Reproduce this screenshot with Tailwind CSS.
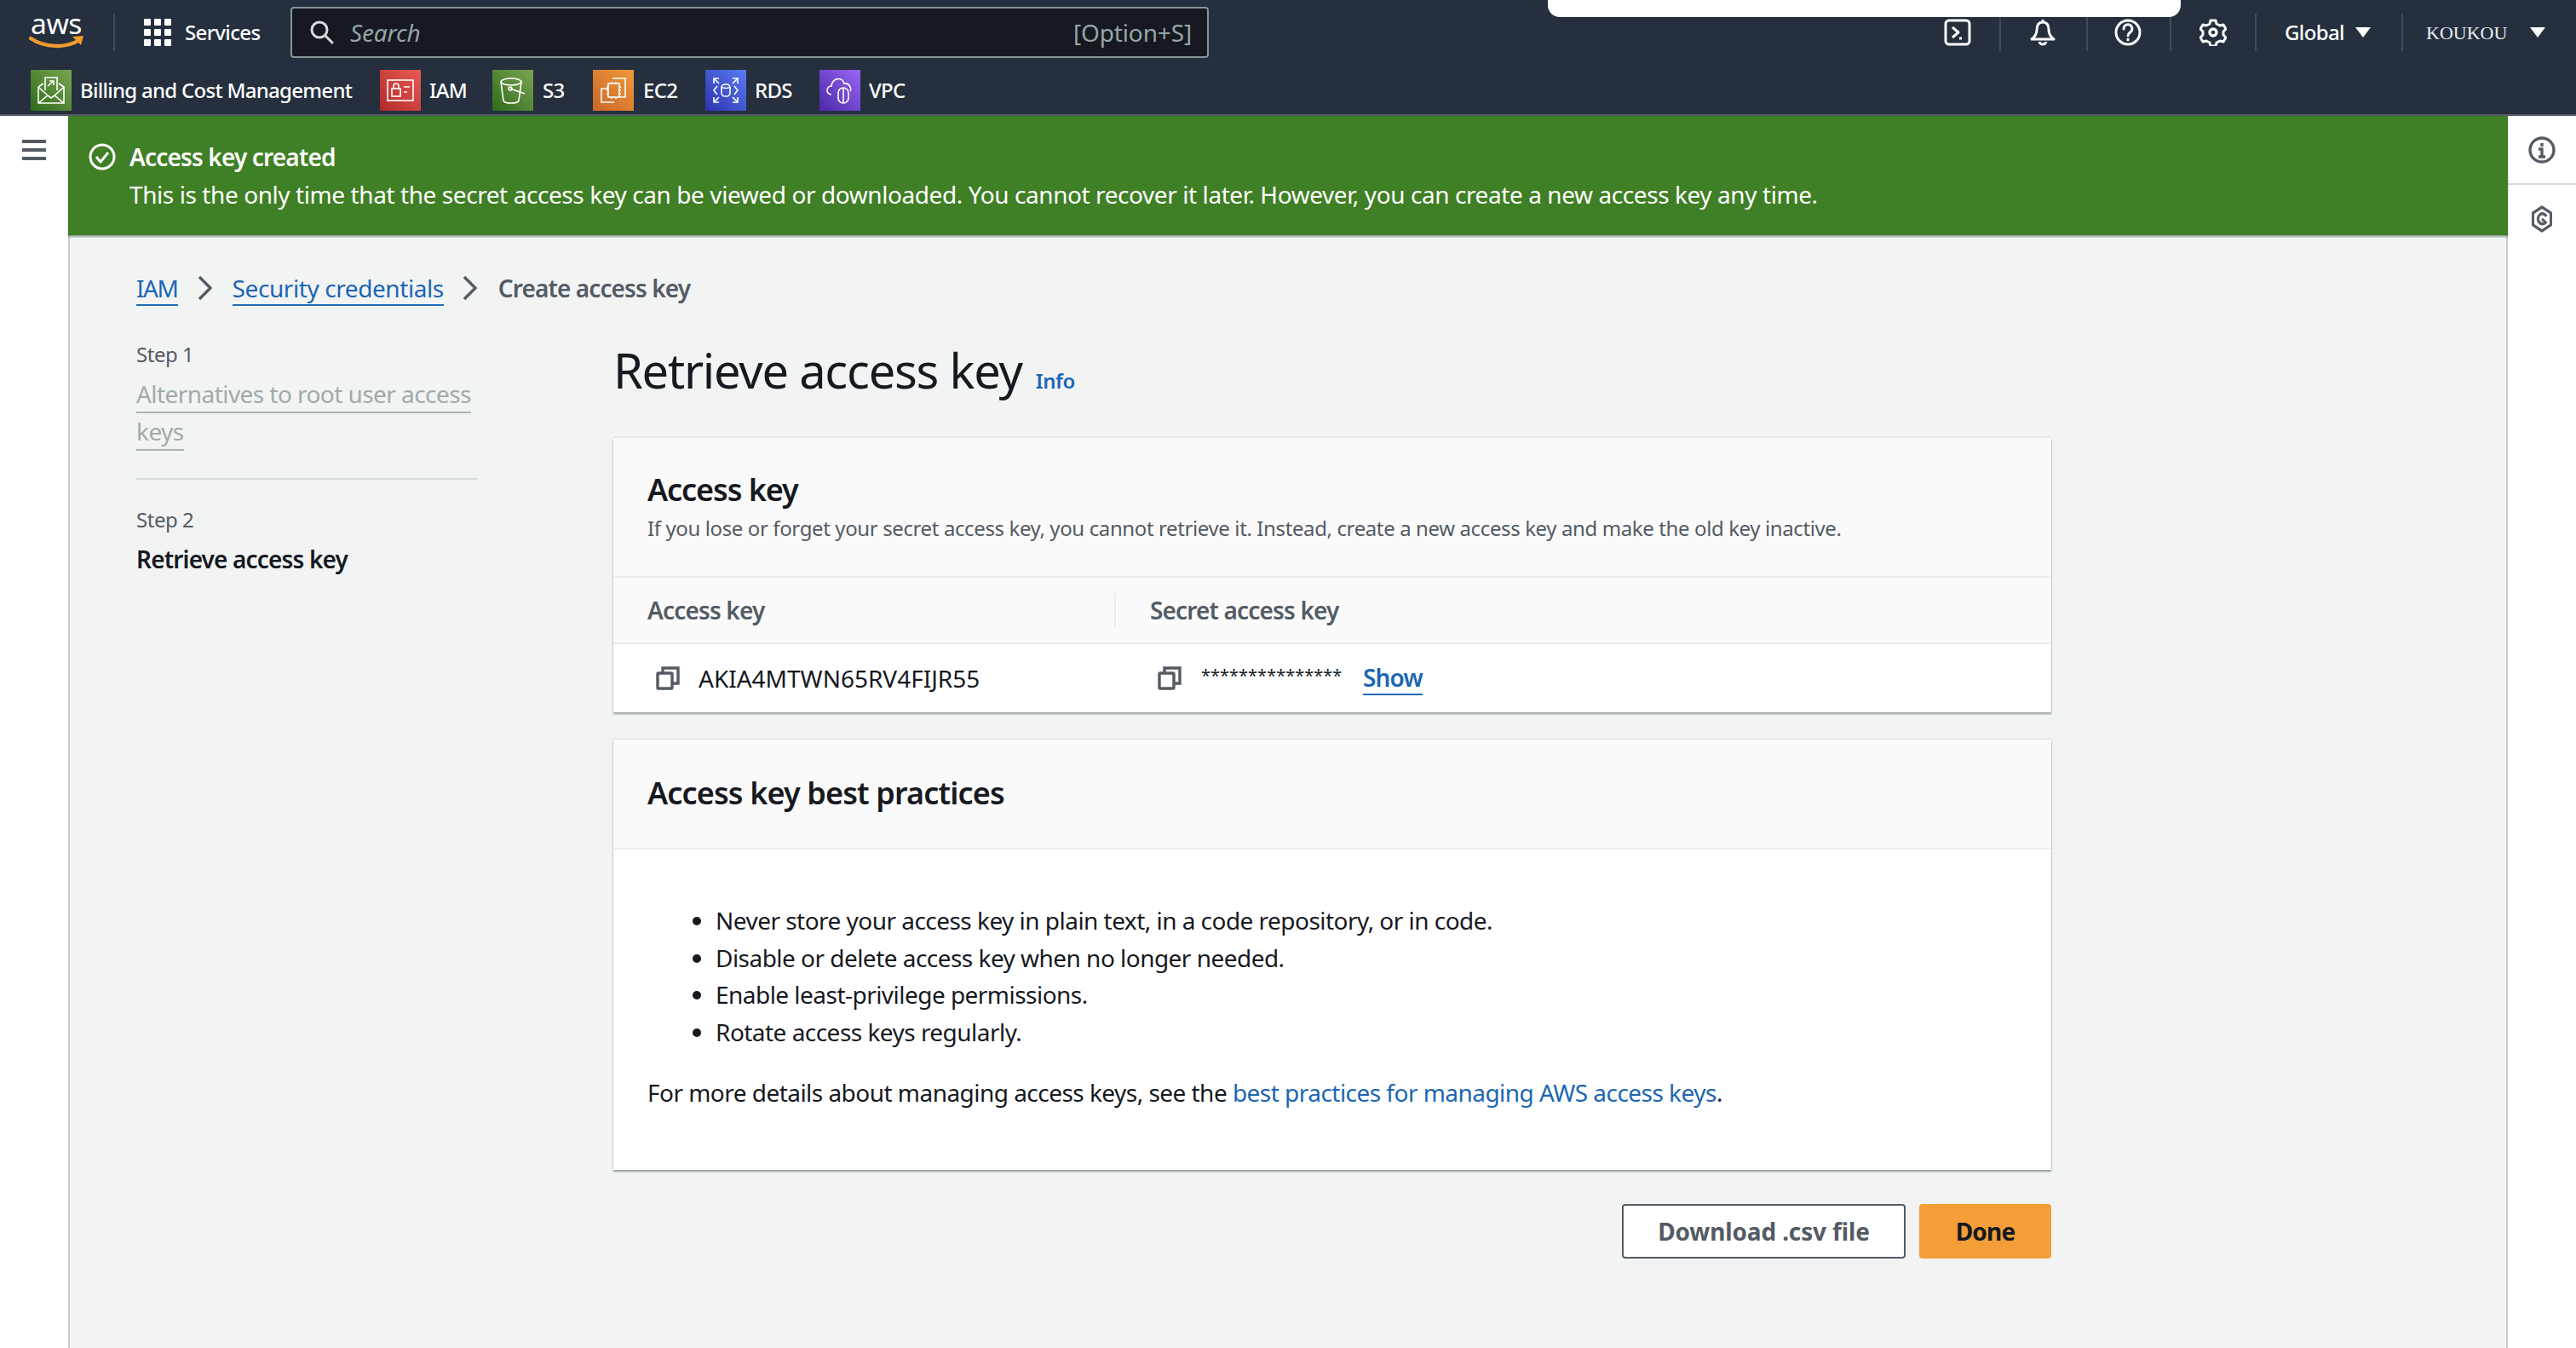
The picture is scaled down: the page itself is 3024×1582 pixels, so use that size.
<!DOCTYPE html>
<html lang="en">
<head>
  <meta charset="UTF-8" />
  <title>Retrieve access key</title>
  <script src="https://cdn.jsdelivr.net/npm/@tailwindcss/browser@4"></script>
</head>
<body class="font-['Noto_Sans',sans-serif] text-[28px] tracking-[-0.017em] text-[#16191f] bg-white">
<div class="relative w-[3024px] h-[1582px] overflow-hidden flex flex-col">

  <!-- white pill over the nav -->
  <div class="absolute left-[1817px] top-0 w-[743px] h-[20px] bg-white rounded-b-[14px]"></div>

  <!-- top nav -->
  <header class="h-[136px] bg-[#252f3e] border-b-2 border-[#545b64] shrink-0 text-white">
    <div class="h-[76px] flex items-center pl-[35px]">
      <div class="w-[66px] h-[44px] shrink-0">
        <svg viewBox="0 0 66 44" class="w-[66px] h-[44px] overflow-visible">
          <text x="1" y="24" font-size="32" fill="#fff" textLength="60" lengthAdjust="spacingAndGlyphs" font-family="Noto Sans">aws</text>
          <path d="M1 29c16 11 42 12 57 2" fill="none" stroke="#f19a2b" stroke-width="4.5" stroke-linecap="round"/>
          <path d="M50 27l13-1-3 11" fill="#f19a2b"/>
        </svg>
      </div>
      <div class="w-[2px] h-[44px] bg-[#414d5c] ml-[32px]"></div>
      <div class="ml-[34px] grid grid-cols-3 gap-[4px] w-[32px] h-[32px] shrink-0">
        <i class="bg-white rounded-[1px]"></i><i class="bg-white rounded-[1px]"></i><i class="bg-white rounded-[1px]"></i>
        <i class="bg-white rounded-[1px]"></i><i class="bg-white rounded-[1px]"></i><i class="bg-white rounded-[1px]"></i>
        <i class="bg-white rounded-[1px]"></i><i class="bg-white rounded-[1px]"></i><i class="bg-white rounded-[1px]"></i>
      </div>
      <span class="ml-[16px] w-[90px] text-[24px] font-medium tracking-[-0.026em] whitespace-nowrap">Services</span>
      <div class="ml-[34px] w-[1078px] h-[60px] bg-[#16191f] border-2 border-[#879596] rounded-[4px] flex items-center pl-[20px] pr-[18px] tracking-[-0.005em]">
        <svg viewBox="0 0 30 30" class="w-[30px] h-[30px]" fill="none" stroke="#d5dbdb" stroke-width="3"><circle cx="12" cy="12" r="9"/><path d="M19 19l8 8" stroke-linecap="round"/></svg>
        <span class="ml-[18px] italic text-[#95a5a6]">Search</span>
        <span class="ml-auto text-[#95a5a6]">[Option+S]</span>
      </div>
      <div class="ml-auto flex items-center h-[44px] text-[24px] font-medium tracking-[-0.026em]">
        <svg viewBox="0 0 32 32" class="w-[32px] h-[32px]" fill="none" stroke="#fff" stroke-width="3"><rect x="2" y="2" width="28" height="28" rx="4"/><path d="M10 10l7 6-7 6M18 23h3" stroke-linejoin="round"/></svg>
        <div class="w-[2px] h-[44px] bg-[#414d5c] ml-[33px]"></div>
        <svg viewBox="0 0 32 32" class="w-[32px] h-[32px] ml-[33px]" fill="none" stroke="#fff" stroke-width="3" stroke-linejoin="round"><path d="M16 4c-5 0-7 4-7 9 0 5-2 8-6 11h26c-4-3-6-6-6-11 0-5-2-9-7-9zM16 1v3M12 27c1 4 7 4 8 0"/></svg>
        <div class="w-[2px] h-[44px] bg-[#414d5c] ml-[35px]"></div>
        <svg viewBox="0 0 32 32" class="w-[32px] h-[32px] ml-[31px]" fill="none" stroke="#fff" stroke-width="3"><circle cx="16" cy="16" r="14"/><path d="M11 12c0-7 10-7 10 0 0 4-5 4-5 8" stroke-linecap="round"/><path d="M16 23v3"/></svg>
        <div class="w-[2px] h-[44px] bg-[#414d5c] ml-[33px]"></div>
        <svg viewBox="0 0 32 32" class="w-[32px] h-[32px] ml-[33px]" fill="none" stroke="#fff" stroke-width="3.4"><circle cx="16" cy="16" r="4"/><path d="M13 2h6l1 4 4 2 4-1 3 5-3 3v4l3 3-3 5-4-1-4 2-1 4h-6l-1-4-4-2-4 1-3-5 3-3v-4L1 12l3-5 4 1 4-2z" stroke-width="3" stroke-linejoin="round"/></svg>
        <div class="w-[2px] h-[44px] bg-[#414d5c] ml-[33px]"></div>
        <span class="ml-[33px] w-[72px]">Global</span>
        <span class="ml-[11px] w-0 h-0 border-x-[9px] border-x-transparent border-t-[12px] border-t-white"></span>
        <div class="w-[2px] h-[44px] bg-[#414d5c] ml-[36px]"></div>
        <span class="ml-[27px] w-[122px] font-['Liberation_Serif',serif] font-normal text-[22px] tracking-normal text-[#eaeded]">KOUKOU</span>
        <span class="w-0 h-0 border-x-[9px] border-x-transparent border-t-[12px] border-t-white mr-[36px]"></span>
      </div>
    </div>
    <nav class="h-[58px] flex items-start pl-[36px] pt-[6px] text-[24px] font-medium tracking-[-0.03em]">
      <div class="flex items-center h-[48px]">
        <div class="w-[48px] h-[48px] bg-gradient-to-tr from-[#2e6b1b] to-[#7aa650] flex items-center justify-center">
          <svg viewBox="0 0 32 32" class="w-[32px] h-[32px]" fill="none" stroke="#fff" stroke-width="1.6"><path d="M1 12v19h30V12l-6-4M1 12l6-4M1 31l11-9 4 3 4-3 11 9M1 12l11 10M31 12L20 22"/><path d="M9 16V1h14v15M12 11l7-6M14 5h5v5"/></svg>
        </div>
        <span class="ml-[10px] whitespace-nowrap w-[352px]">Billing and Cost Management</span>
      </div>
      <div class="flex items-center h-[48px]">
        <div class="w-[48px] h-[48px] bg-gradient-to-tr from-[#b02a2a] to-[#ea5a55] flex items-center justify-center">
          <svg viewBox="0 0 32 32" class="w-[32px] h-[32px]" fill="none" stroke="#fff" stroke-width="1.6"><rect x="1" y="4" width="30" height="24"/><rect x="6" y="14" width="10" height="9"/><path d="M8 14v-3a3 3 0 0 1 6 0v3M20 12h7M20 18h4"/></svg>
        </div>
        <span class="ml-[10px] w-[74px]">IAM</span>
      </div>
      <div class="flex items-center h-[48px]">
        <div class="w-[48px] h-[48px] bg-gradient-to-tr from-[#2e6b1b] to-[#7aa650] flex items-center justify-center">
          <svg viewBox="0 0 32 32" class="w-[32px] h-[32px]" fill="none" stroke="#fff" stroke-width="1.6"><ellipse cx="14" cy="6" rx="12" ry="4"/><path d="M2 6l3 22c1 4 17 4 18 0l3-22M13 14l17 6"/><circle cx="13" cy="14" r="2"/></svg>
        </div>
        <span class="ml-[11px] w-[59px]">S3</span>
      </div>
      <div class="flex items-center h-[48px]">
        <div class="w-[48px] h-[48px] bg-gradient-to-tr from-[#c8662a] to-[#ef9a3a] flex items-center justify-center">
          <svg viewBox="0 0 32 32" class="w-[32px] h-[32px]" fill="none" stroke="#fff" stroke-width="1.6"><path d="M15 2h15v22h-7M17 30H2V14h7"/><rect x="10" y="8" width="13" height="16"/><path d="M8 12h2M8 16h2M8 20h2M23 12h2M23 16h2M23 20h2M14 6v2M19 6v2M14 24v2M19 24v2"/></svg>
        </div>
        <span class="ml-[11px] w-[73px]">EC2</span>
      </div>
      <div class="flex items-center h-[48px]">
        <div class="w-[48px] h-[48px] bg-gradient-to-tr from-[#2e32b0] to-[#5b7cf2] flex items-center justify-center">
          <svg viewBox="0 0 32 32" class="w-[32px] h-[32px]" fill="none" stroke="#fff" stroke-width="1.6"><path d="M2 8V2h6M2 2l6 6M30 8V2h-6M30 2l-6 6M2 24v6h6M2 30l6-6M30 24v6h-6M30 30l-6-6M6 11l-4 5 4 5M26 11l4 5-4 5"/><rect x="11" y="9" width="10" height="14" rx="4"/><path d="M11 12c2 2 8 2 10 0"/></svg>
        </div>
        <span class="ml-[10px] w-[76px]">RDS</span>
      </div>
      <div class="flex items-center h-[48px]">
        <div class="w-[48px] h-[48px] bg-gradient-to-tr from-[#4d27a8] to-[#9a66f5] flex items-center justify-center">
          <svg viewBox="0 0 32 32" class="w-[32px] h-[32px]" fill="none" stroke="#fff" stroke-width="1.6"><path d="M6 21c-7-1-6-10 0-10 1-9 12-12 15-3 6-1 9 6 7 9"/><rect x="14" y="13" width="12" height="18" rx="6"/><path d="M20 13v18"/></svg>
        </div>
        <span class="ml-[10px]">VPC</span>
      </div>
    </nav>
  </header>

  <div class="flex-1 flex min-h-0">
    <!-- left rail -->
    <aside class="w-[80px] shrink-0 bg-white pt-[28px] pl-[26px]">
      <div class="w-[28px] flex flex-col gap-[6px]">
        <i class="h-[4px] bg-[#545b64]"></i><i class="h-[4px] bg-[#545b64]"></i><i class="h-[4px] bg-[#545b64]"></i>
      </div>
    </aside>

    <main class="flex-1 min-w-0 bg-[#f2f3f3] border-x-2 border-[#c6cbcc] relative">
      <!-- flash banner -->
      <div class="h-[140px] -mx-[2px] bg-[#3f7f25] text-white shadow-[0_2px_2px_rgba(0,28,36,0.4)] flex pl-[24px] pt-[32px]">
        <svg viewBox="0 0 32 32" class="w-[32px] h-[32px] shrink-0" fill="none" stroke="#fff" stroke-width="3"><circle cx="16" cy="16" r="14"/><path d="M9 16l5 6 9-11" stroke-linejoin="round"/></svg>
        <div class="ml-[16px] mt-[-6px]">
          <p class="font-semibold tracking-[-0.03em] leading-[44px]">Access key created</p>
          <p class="leading-[44px] tracking-[-0.015em] whitespace-nowrap">This is the only time that the secret access key can be viewed or downloaded. You cannot recover it later. However, you can create a new access key any time.</p>
        </div>
      </div>

      <div class="pl-[78px]">
        <!-- breadcrumb -->
        <div class="flex items-center h-[40px] mt-[42px] text-[#1b66b3]">
          <a class="border-b-2 border-[#1f6cb8] leading-[38px] mt-[2px] tracking-[-0.05em]">IAM</a>
          <svg viewBox="0 0 18 30" class="w-[18px] h-[30px] ml-[23px]" fill="none" stroke="#545b64" stroke-width="3.4"><path d="M2 2l13 13L2 28"/></svg>
          <a class="ml-[23px] border-b-2 border-[#1f6cb8] leading-[38px] mt-[2px] tracking-[-0.015em]">Security credentials</a>
          <svg viewBox="0 0 18 30" class="w-[18px] h-[30px] ml-[22px]" fill="none" stroke="#545b64" stroke-width="3.4"><path d="M2 2l13 13L2 28"/></svg>
          <span class="ml-[24px] font-semibold tracking-[-0.032em] text-[#545b64]">Create access key</span>
        </div>

        <div class="flex mt-[18px]">
          <!-- wizard steps -->
          <div class="w-[400px] shrink-0 pt-[18px]">
            <p class="text-[24px] leading-[44px] text-[#545b64]">Step 1</p>
            <a class="block w-fit text-[#a0abac] leading-[44px] tracking-[-0.02em] whitespace-nowrap pt-[2px]"><span class="border-b-2 border-[#a9b3b4] pb-[2px]">Alternatives to root user access</span><br /><span class="border-b-2 border-[#a9b3b4] pb-[2px]">keys</span></a>
            <div class="h-[2px] bg-[#d5dbdb] mt-[33px]"></div>
            <p class="text-[24px] leading-[44px] text-[#545b64] mt-[25px]">Step 2</p>
            <p class="font-semibold tracking-[-0.03em] leading-[44px] mt-[2px]">Retrieve access key</p>
          </div>

          <!-- form -->
          <div class="ml-[160px] w-[1688px]">
            <div class="flex items-baseline h-[132px] pt-[22px]">
              <h1 class="text-[56px] tracking-[-0.022em] leading-[72px]">Retrieve access key</h1>
              <a class="ml-[16px] text-[24px] font-semibold text-[#1b66b3]">Info</a>
            </div>

            <section class="mt-[6px] bg-white shadow-[0_2px_2px_rgba(0,28,36,0.4),0_-1px_2px_rgba(0,28,36,0.1)]">
              <div class="h-[164px] bg-[#fafafa] border-b-2 border-[#eaeded] pl-[40px] pt-[33px]">
                <h2 class="text-[36px] font-semibold tracking-[-0.03em] leading-[56px]">Access key</h2>
                <p class="text-[24px] tracking-[-0.016em] leading-[34px] text-[#545b64]">If you lose or forget your secret access key, you cannot retrieve it. Instead, create a new access key and make the old key inactive.</p>
              </div>
              <div class="h-[78px] bg-[#fafafa] border-b-2 border-[#eaeded] flex items-center pl-[40px] font-semibold tracking-[-0.03em] text-[#545b64]">
                <span class="w-[548px]">Access key</span>
                <i class="w-[2px] h-[40px] bg-[#eaeded]"></i>
                <span class="ml-[40px]">Secret access key</span>
              </div>
              <div class="h-[80px] flex items-center pl-[50px]">
                <svg viewBox="0 0 28 28" class="w-[28px] h-[28px]" fill="none" stroke="#545b64" stroke-width="3.4"><rect x="2" y="8" width="17" height="18" rx="1"/><path d="M8 8V2h18v18h-7"/></svg>
                <span class="ml-[22px] w-[539px] tracking-normal">AKIA4MTWN65RV4FIJR55</span>
                <svg viewBox="0 0 28 28" class="w-[28px] h-[28px]" fill="none" stroke="#545b64" stroke-width="3.4"><rect x="2" y="8" width="17" height="18" rx="1"/><path d="M8 8V2h18v18h-7"/></svg>
                <span class="ml-[23px] text-[20px] tracking-normal w-[190px] whitespace-nowrap mt-[-6px]">***************</span>
                <a class="font-semibold tracking-[-0.03em] text-[#1b66b3] border-b-2 border-[#1f6cb8] leading-[38px]">Show</a>
              </div>
            </section>

            <section class="mt-[32px] bg-white shadow-[0_2px_2px_rgba(0,28,36,0.4),0_-1px_2px_rgba(0,28,36,0.1)]">
              <div class="h-[129px] bg-[#fafafa] border-b-2 border-[#eaeded] pl-[40px] flex items-center pb-[2px]">
                <h2 class="text-[36px] font-semibold tracking-[-0.024em]">Access key best practices</h2>
              </div>
              <div class="h-[376px] pl-[40px] pt-[62px] tracking-[-0.019em]">
                <ul class="list-disc pl-[80px] leading-[43.6px]">
                  <li>Never store your access key in plain text, in a code repository, or in code.</li>
                  <li>Disable or delete access key when no longer needed.</li>
                  <li>Enable least-privilege permissions.</li>
                  <li>Rotate access keys regularly.</li>
                </ul>
                <p class="mt-[27px] leading-[44px]">For more details about managing access keys, see the <a class="text-[#1b66b3]">best practices for managing AWS access keys</a>.</p>
              </div>
            </section>

            <div class="flex justify-end gap-[16px] mt-[40px]">
              <button class="w-[333px] h-[64px] bg-white border-2 border-[#545b64] rounded-[4px] font-bold text-[#545b64] tracking-[-0.005em]">Download .csv file</button>
              <button class="w-[155px] h-[64px] bg-[#f39e36] rounded-[4px] font-bold tracking-[-0.03em] text-[#16191f]">Done</button>
            </div>
          </div>
        </div>
      </div>
    </main>

    <!-- right rail -->
    <aside class="w-[80px] shrink-0 bg-white">
      <div class="h-[81px] border-b-2 border-[#d5dbdb] flex items-center justify-center">
        <svg viewBox="0 0 32 32" class="w-[32px] h-[32px]" fill="none" stroke="#545b64" stroke-width="3.4"><circle cx="16" cy="16" r="14"/><path d="M16 8v4M12 15h4v9M12 24h8" /></svg>
      </div>
      <div class="h-[80px] flex items-center justify-center">
        <svg viewBox="0 0 32 32" class="w-[28px] h-[32px]" fill="none" stroke="#545b64" stroke-width="3.4" stroke-linejoin="round" preserveAspectRatio="none"><path d="M16 2l12 7v14l-12 7-12-7V9z"/><path d="M22 13a6 6 0 1 0-1 7l-5-4"/></svg>
      </div>
    </aside>
  </div>
</div>
</body>
</html>
